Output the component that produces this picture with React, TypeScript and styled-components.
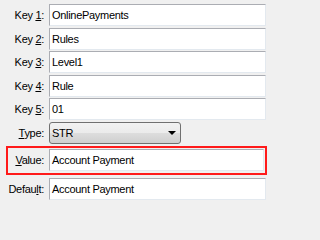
import React from 'react'
import styled, { createGlobalStyle } from 'styled-components'

const GlobalStyle = createGlobalStyle`
	html, body {
		margin: 0;
		padding: 0;
		background: #f0f0f0;
	}
	body {
		font-family: "Liberation Sans", Arial, sans-serif;
		font-size: 11px;
		letter-spacing: -0.3px;
		color: #000;
	}
`

const Form = styled.div`
	width: 270px;
	height: 201px;
	box-sizing: border-box;
	padding-top: 4px;
	display: flex;
	flex-direction: column;
	overflow: hidden;
`
const Row = styled.div<{ $gap?: number }>`
	display: flex;
	align-items: center;
	height: 22px;
	margin-top: ${({ $gap }) => $gap ?? 0}px;
	margin-right: 4px;
`
const HighlightRow = styled.div`
	display: flex;
	align-items: center;
	margin: 2px 3px 0 6px;
	padding: 1px 1px 2px 0;
	border: 2px solid #ff1a1a;
`
const Label = styled.label<{ $width?: number }>`
	width: ${({ $width }) => $width ?? 49}px;
	flex: none;
	box-sizing: border-box;
	padding-right: 5px;
	text-align: right;
	white-space: nowrap;
	u {
		text-underline-offset: 1px;
	}
`
const Field = styled.div`
	flex: 1;
	height: 22px;
	box-sizing: border-box;
	background: #fff;
	border: 1px solid;
	border-color: #abadb3 #e3e9ef #e3e9ef #abadb3;
	padding-left: 2px;
	display: flex;
	align-items: center;
	white-space: nowrap;
	overflow: hidden;
`
const SelectBox = styled.div`
	width: 132px;
	height: 22px;
	box-sizing: border-box;
	border: 1px solid #707070;
	border-radius: 3px;
	background: linear-gradient(#f2f2f2 0%, #ebebeb 50%, #dddddd 51%, #cfcfcf 100%);
	display: flex;
	align-items: center;
	justify-content: space-between;
	padding: 0 4px 0 2px;
`
const Arrow = styled.span`
	width: 0;
	height: 0;
	border-left: 4px solid transparent;
	border-right: 4px solid transparent;
	border-top: 4px solid #000;
`

const keys = ['OnlinePayments', 'Rules', 'Level1', 'Rule', '01']
const gaps = [0, 1.6, 1.6, 1.6, 1.6]

const App = () => {
	return (
		<>
			<GlobalStyle />
			<Form>
				{keys.map((value, i) => (
					<Row key={i} $gap={gaps[i]}>
						<Label>Key <u>{i + 1}</u>:</Label>
						<Field>{value}</Field>
					</Row>
				))}
				<Row $gap={1.6}>
					<Label><u>T</u>ype:</Label>
					<SelectBox>
						<span>STR</span>
						<Arrow />
					</SelectBox>
				</Row>
				<HighlightRow>
					<Label $width={41}><u>V</u>alue:</Label>
					<Field>Account Payment</Field>
				</HighlightRow>
				<Row $gap={3}>
					<Label>Defau<u>l</u>t:</Label>
					<Field>Account Payment</Field>
				</Row>
			</Form>
		</>
	)
}

export default App
